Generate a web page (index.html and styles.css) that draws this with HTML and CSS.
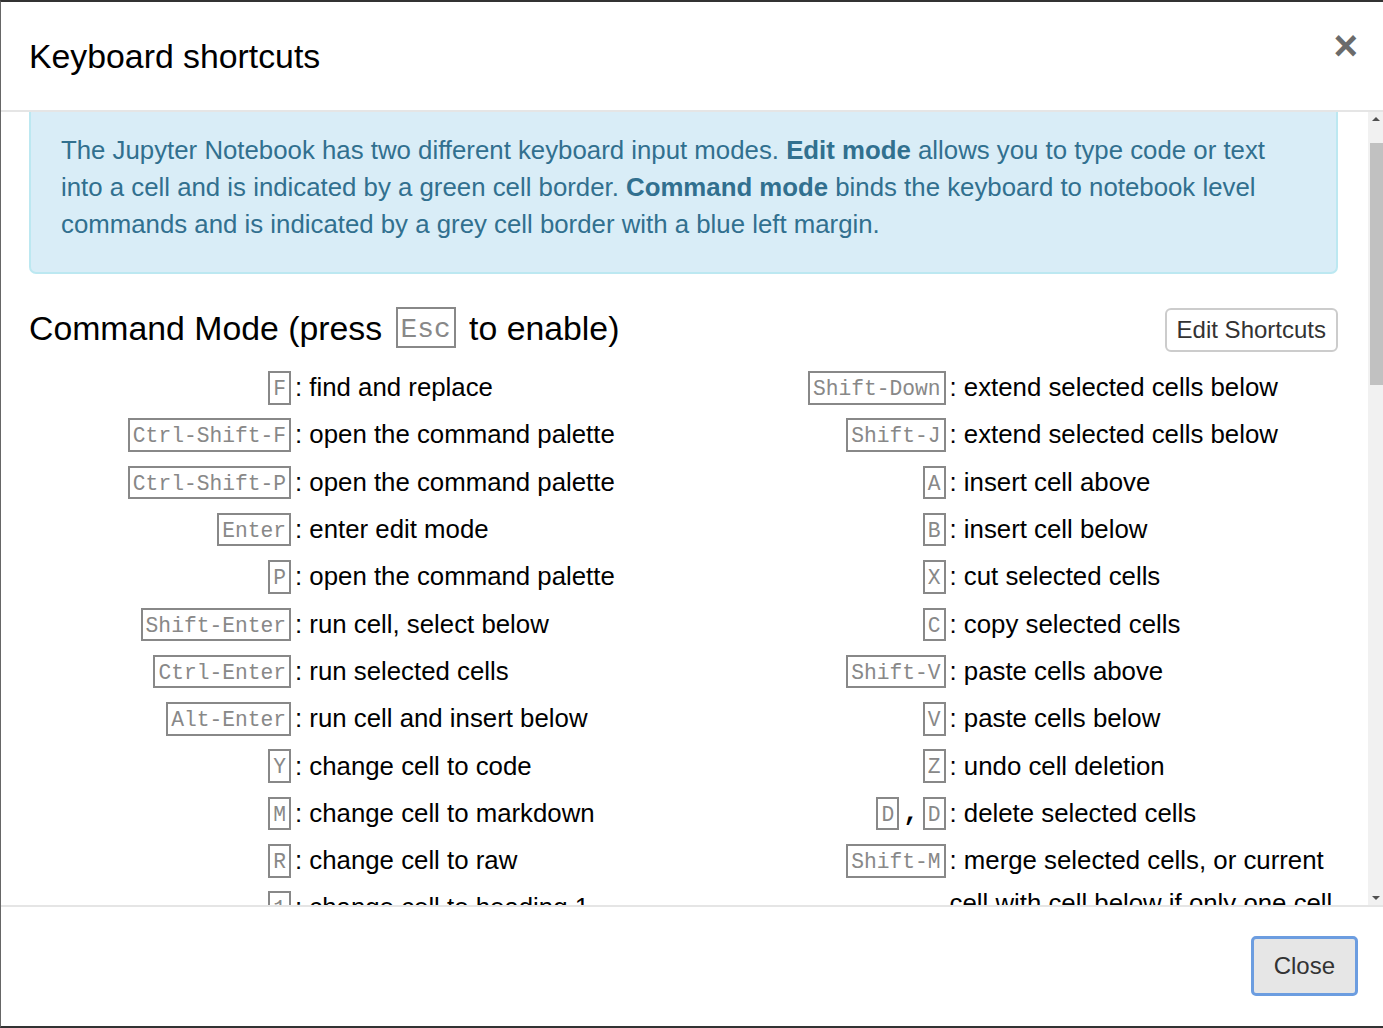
FILE: index.html
```html
<!DOCTYPE html>
<html lang="en">
<head>
    <meta charset="UTF-8">
    <meta name="viewport" content="width=device-width, initial-scale=1.0">
    <title>Keyboard shortcuts</title>
    <link rel="stylesheet" href="styles.css">
</head>
<body>

<div class="modal">
    <div class="modal-header">
        <h4 class="modal-title">Keyboard shortcuts</h4>
        <span class="close">&times;</span>
    </div>

    <div class="modal-body">
        <div class="scroll-content" id="scroll-content">
            <div class="alert">
                The Jupyter Notebook has two different keyboard input modes. <b>Edit mode</b> allows you to type code or text into a cell and is indicated by a green cell border. <b>Command mode</b> binds the keyboard to notebook level commands and is indicated by a grey cell border with a blue left margin.
            </div>

            <h4 class="section-title">
                <span>Command Mode (press <kbd>Esc</kbd> to enable)</span>
                <button class="btn-edit">Edit Shortcuts</button>
            </h4>
            <div class="shortcuts">
                <div class="col">
                    <div class="row"><span class="key"><kbd>F</kbd></span><span class="desc">: find and replace</span></div>
                    <div class="row"><span class="key"><kbd>Ctrl-Shift-F</kbd></span><span class="desc">: open the command palette</span></div>
                    <div class="row"><span class="key"><kbd>Ctrl-Shift-P</kbd></span><span class="desc">: open the command palette</span></div>
                    <div class="row"><span class="key"><kbd>Enter</kbd></span><span class="desc">: enter edit mode</span></div>
                    <div class="row"><span class="key"><kbd>P</kbd></span><span class="desc">: open the command palette</span></div>
                    <div class="row"><span class="key"><kbd>Shift-Enter</kbd></span><span class="desc">: run cell, select below</span></div>
                    <div class="row"><span class="key"><kbd>Ctrl-Enter</kbd></span><span class="desc">: run selected cells</span></div>
                    <div class="row"><span class="key"><kbd>Alt-Enter</kbd></span><span class="desc">: run cell and insert below</span></div>
                    <div class="row"><span class="key"><kbd>Y</kbd></span><span class="desc">: change cell to code</span></div>
                    <div class="row"><span class="key"><kbd>M</kbd></span><span class="desc">: change cell to markdown</span></div>
                    <div class="row"><span class="key"><kbd>R</kbd></span><span class="desc">: change cell to raw</span></div>
                    <div class="row"><span class="key"><kbd>1</kbd></span><span class="desc">: change cell to heading 1</span></div>
                    <div class="row"><span class="key"><kbd>2</kbd></span><span class="desc">: change cell to heading 2</span></div>
                    <div class="row"><span class="key"><kbd>3</kbd></span><span class="desc">: change cell to heading 3</span></div>
                    <div class="row"><span class="key"><kbd>4</kbd></span><span class="desc">: change cell to heading 4</span></div>
                    <div class="row"><span class="key"><kbd>5</kbd></span><span class="desc">: change cell to heading 5</span></div>
                    <div class="row"><span class="key"><kbd>6</kbd></span><span class="desc">: change cell to heading 6</span></div>
                    <div class="row"><span class="key"><kbd>K</kbd></span><span class="desc">: select cell above</span></div>
                    <div class="row"><span class="key"><kbd>Up</kbd></span><span class="desc">: select cell above</span></div>
                    <div class="row"><span class="key"><kbd>Down</kbd></span><span class="desc">: select cell below</span></div>
                    <div class="row"><span class="key"><kbd>J</kbd></span><span class="desc">: select cell below</span></div>
                    <div class="row"><span class="key"><kbd>Shift-K</kbd></span><span class="desc">: extend selected cells above</span></div>
                    <div class="row"><span class="key"><kbd>Shift-Up</kbd></span><span class="desc">: extend selected cells above</span></div>
                </div>
                <div class="col">
                    <div class="row"><span class="key"><kbd>Shift-Down</kbd></span><span class="desc">: extend selected cells below</span></div>
                    <div class="row"><span class="key"><kbd>Shift-J</kbd></span><span class="desc">: extend selected cells below</span></div>
                    <div class="row"><span class="key"><kbd>A</kbd></span><span class="desc">: insert cell above</span></div>
                    <div class="row"><span class="key"><kbd>B</kbd></span><span class="desc">: insert cell below</span></div>
                    <div class="row"><span class="key"><kbd>X</kbd></span><span class="desc">: cut selected cells</span></div>
                    <div class="row"><span class="key"><kbd>C</kbd></span><span class="desc">: copy selected cells</span></div>
                    <div class="row"><span class="key"><kbd>Shift-V</kbd></span><span class="desc">: paste cells above</span></div>
                    <div class="row"><span class="key"><kbd>V</kbd></span><span class="desc">: paste cells below</span></div>
                    <div class="row"><span class="key"><kbd>Z</kbd></span><span class="desc">: undo cell deletion</span></div>
                    <div class="row"><span class="key"><kbd>D</kbd>,<kbd>D</kbd></span><span class="desc">: delete selected cells</span></div>
                    <div class="row"><span class="key"><kbd>Shift-M</kbd></span><span class="desc">: merge selected cells, or current cell with cell below if only one cell is selected</span></div>
                    <div class="row"><span class="key"><kbd>Ctrl-S</kbd></span><span class="desc">: Save and Checkpoint</span></div>
                    <div class="row"><span class="key"><kbd>S</kbd></span><span class="desc">: Save and Checkpoint</span></div>
                    <div class="row"><span class="key"><kbd>Shift-L</kbd></span><span class="desc">: toggles line numbers in all cells, and persist the setting</span></div>
                    <div class="row"><span class="key"><kbd>L</kbd></span><span class="desc">: toggle line numbers</span></div>
                    <div class="row"><span class="key"><kbd>O</kbd></span><span class="desc">: toggle output of selected cells</span></div>
                    <div class="row"><span class="key"><kbd>Shift-O</kbd></span><span class="desc">: toggle output scrolling of selected cells</span></div>
                    <div class="row"><span class="key"><kbd>H</kbd></span><span class="desc">: show keyboard shortcuts</span></div>
                    <div class="row"><span class="key"><kbd>I</kbd>,<kbd>I</kbd></span><span class="desc">: interrupt the kernel</span></div>
                    <div class="row"><span class="key"><kbd>0</kbd>,<kbd>0</kbd></span><span class="desc">: restart the kernel (with dialog)</span></div>
                    <div class="row"><span class="key"><kbd>Esc</kbd></span><span class="desc">: close the pager</span></div>
                    <div class="row"><span class="key"><kbd>Q</kbd></span><span class="desc">: close the pager</span></div>
                    <div class="row"><span class="key"><kbd>Shift-Space</kbd></span><span class="desc">: scroll notebook up</span></div>
                    <div class="row"><span class="key"><kbd>Space</kbd></span><span class="desc">: scroll notebook down</span></div>
                </div>
            </div>

            <h4 class="section-title edit-mode">
                <span>Edit Mode (press <kbd>Enter</kbd> to enable)</span>
            </h4>
            <div class="shortcuts">
                <div class="col">
                    <div class="row"><span class="key"><kbd>Tab</kbd></span><span class="desc">: code completion or indent</span></div>
                    <div class="row"><span class="key"><kbd>Shift-Tab</kbd></span><span class="desc">: tooltip</span></div>
                    <div class="row"><span class="key"><kbd>Ctrl-]</kbd></span><span class="desc">: indent</span></div>
                    <div class="row"><span class="key"><kbd>Ctrl-[</kbd></span><span class="desc">: dedent</span></div>
                    <div class="row"><span class="key"><kbd>Ctrl-A</kbd></span><span class="desc">: select all</span></div>
                    <div class="row"><span class="key"><kbd>Ctrl-Z</kbd></span><span class="desc">: undo</span></div>
                    <div class="row"><span class="key"><kbd>Ctrl-/</kbd></span><span class="desc">: comment</span></div>
                    <div class="row"><span class="key"><kbd>Ctrl-D</kbd></span><span class="desc">: delete whole line</span></div>
                    <div class="row"><span class="key"><kbd>Ctrl-U</kbd></span><span class="desc">: undo selection</span></div>
                    <div class="row"><span class="key"><kbd>Insert</kbd></span><span class="desc">: toggle overwrite flag</span></div>
                    <div class="row"><span class="key"><kbd>Ctrl-Home</kbd></span><span class="desc">: go to cell start</span></div>
                    <div class="row"><span class="key"><kbd>Ctrl-Up</kbd></span><span class="desc">: go to cell start</span></div>
                    <div class="row"><span class="key"><kbd>Ctrl-End</kbd></span><span class="desc">: go to cell end</span></div>
                    <div class="row"><span class="key"><kbd>Ctrl-Down</kbd></span><span class="desc">: go to cell end</span></div>
                    <div class="row"><span class="key"><kbd>Ctrl-Left</kbd></span><span class="desc">: go one word left</span></div>
                </div>
                <div class="col">
                    <div class="row"><span class="key"><kbd>Ctrl-Right</kbd></span><span class="desc">: go one word right</span></div>
                    <div class="row"><span class="key"><kbd>Ctrl-Backspace</kbd></span><span class="desc">: delete word before</span></div>
                    <div class="row"><span class="key"><kbd>Ctrl-Delete</kbd></span><span class="desc">: delete word after</span></div>
                    <div class="row"><span class="key"><kbd>Ctrl-Y</kbd></span><span class="desc">: redo</span></div>
                    <div class="row"><span class="key"><kbd>Alt-U</kbd></span><span class="desc">: redo selection</span></div>
                    <div class="row"><span class="key"><kbd>Ctrl-M</kbd></span><span class="desc">: enter command mode</span></div>
                    <div class="row"><span class="key"><kbd>Ctrl-Shift-F</kbd></span><span class="desc">: open the command palette</span></div>
                    <div class="row"><span class="key"><kbd>Ctrl-Shift-P</kbd></span><span class="desc">: open the command palette</span></div>
                    <div class="row"><span class="key"><kbd>Esc</kbd></span><span class="desc">: enter command mode</span></div>
                    <div class="row"><span class="key"><kbd>Shift-Enter</kbd></span><span class="desc">: run cell, select below</span></div>
                    <div class="row"><span class="key"><kbd>Ctrl-Enter</kbd></span><span class="desc">: run selected cells</span></div>
                    <div class="row"><span class="key"><kbd>Alt-Enter</kbd></span><span class="desc">: run cell and insert below</span></div>
                    <div class="row"><span class="key"><kbd>Ctrl-S</kbd></span><span class="desc">: Save and Checkpoint</span></div>
                    <div class="row"><span class="key"><kbd>Down</kbd></span><span class="desc">: move cursor down</span></div>
                    <div class="row"><span class="key"><kbd>Up</kbd></span><span class="desc">: move cursor up</span></div>
                </div>
            </div>
        </div>

        <div class="scrollbar">
            <div class="scroll-btn"><span class="arrow-up"></span></div>
            <div class="scroll-track">
                <div class="scroll-thumb"></div>
            </div>
            <div class="scroll-btn"><span class="arrow-down"></span></div>
        </div>
    </div>

    <div class="modal-footer">
        <button class="btn-close">Close</button>
    </div>
</div>

<script>
    // dialog was scrolled down a little when it was captured
    document.getElementById('scroll-content').scrollTop = 42;
</script>

</body>
</html>
```

FILE: styles.css
```css
html, body {
    margin: 0;
    padding: 0;
    height: 100%;
    overflow: hidden;
}
body {
    font-family: 'Liberation Sans', Arial, sans-serif;
    font-size: 25.8px;
    line-height: 37px;
    color: #000;
    background-color: #2b2b2b;
}
.modal {
    box-sizing: border-box;
    width: 1385px;
    height: 1028px;
    display: flex;
    flex-direction: column;
    background-color: #fff;
    border: 2px solid #333;
    border-left: 1px solid #666;
}
.modal-header {
    display: flex;
    justify-content: space-between;
    align-items: flex-start;
    padding: 30px 25px 29px 28px;
    border-bottom: 2px solid #e5e5e5;
}
.modal-title {
    margin: 0;
    font-size: 33.8px;
    font-weight: normal;
    line-height: 48.6px;
}
.close {
    font-size: 42px;
    font-weight: bold;
    line-height: 1;
    margin-top: -7px;
    color: #6b6b6b;
    cursor: pointer;
}
.modal-body {
    flex: 1;
    min-height: 0;
    display: flex;
}
.scroll-content {
    flex: 1;
    overflow: hidden;
    padding: 30px 30px 30px 28px;
}
.scrollbar {
    flex: 0 0 15px;
    display: flex;
    flex-direction: column;
    background-color: #f1f1f1;
}
.scroll-btn {
    height: 15px;
    display: flex;
    justify-content: center;
    align-items: center;
}
.arrow-up {
    width: 0;
    height: 0;
    border-left: 4px solid transparent;
    border-right: 4px solid transparent;
    border-bottom: 4px solid #505050;
}
.arrow-down {
    width: 0;
    height: 0;
    border-left: 4px solid transparent;
    border-right: 4px solid transparent;
    border-top: 4px solid #505050;
}
.scroll-track {
    flex: 1;
}
.scroll-thumb {
    height: 242px;
    margin: 16px 0 0 2px;
    background-color: #c1c1c1;
}
.alert {
    padding: 30px 30px 29px;
    margin-bottom: 30px;
    color: #31708f;
    background-color: #d9edf7;
    border: 2px solid #bce8f1;
    border-radius: 7px;
}
.section-title {
    display: flex;
    justify-content: space-between;
    align-items: center;
    margin: 0 0 12px;
    font-size: 33.8px;
    font-weight: normal;
    line-height: 48.6px;
}
.section-title kbd {
    vertical-align: 3px;
}
.edit-mode {
    margin-top: 36px;
}
.btn-edit {
    font-family: 'Liberation Sans', Arial, sans-serif;
    font-size: 24px;
    line-height: 36px;
    padding: 2px 10px;
    margin-top: 4px;
    color: #333;
    background-color: #fff;
    border: 2px solid #ccc;
    border-radius: 6px;
}
kbd {
    display: inline-block;
    font-family: 'Liberation Mono', 'Courier New', monospace;
    font-size: 0.825em;
    line-height: 1.2;
    padding: 4px 3px 0;
    margin: 0 4px;
    color: #888;
    background-color: transparent;
    border: 2px solid #888;
    vertical-align: 5px;
}
.shortcuts {
    display: grid;
    grid-template-columns: 1fr 1fr;
}
.row {
    display: flex;
    align-items: flex-start;
}
.key {
    flex: 0 0 266px;
    height: 47.3px;
    display: flex;
    justify-content: flex-end;
    align-items: center;
    font-family: 'Liberation Mono', 'Courier New', monospace;
    font-weight: bold;
}
.key kbd {
    font-weight: normal;
}
.desc {
    flex: 1;
    line-height: 43px;
    padding: 2px 0 2.3px;
}
.modal-footer {
    display: flex;
    justify-content: flex-end;
    padding: 29px 25px 30px;
    border-top: 2px solid #e5e5e5;
}
.btn-close {
    font-family: 'Liberation Sans', Arial, sans-serif;
    font-size: 24px;
    line-height: 36px;
    padding: 9px 20px;
    color: #333;
    background-color: #e6e6e6;
    border: 3px solid #6c9de0;
    border-radius: 5px;
}
```
